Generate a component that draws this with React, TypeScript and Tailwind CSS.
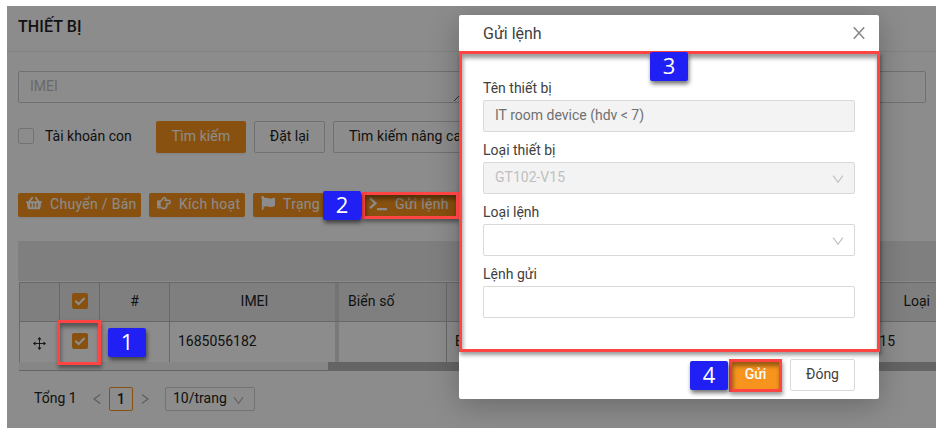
import React from "react";
import { FaShoppingBasket, FaRegHandPointRight, FaFlag } from "react-icons/fa";

function Chevron({ className = "" }: { className?: string }) {
  return (
    <svg width="12" height="12" viewBox="0 0 12 12" fill="none" stroke="currentColor" strokeWidth="1.1" className={className}>
      <path d="M1.2 2.6 6 9.2l4.8-6.6" />
    </svg>
  );
}

function PageArrow({ flip = false }: { flip?: boolean }) {
  return (
    <svg width="8" height="12" viewBox="0 0 8 12" fill="none" stroke="#aaa" strokeWidth="1.2" className={flip ? "-scale-x-100" : ""}>
      <path d="M7.2 1.6 1 6l6.2 4.6" />
    </svg>
  );
}

function Checked() {
  return (
    <span className="-mt-0.5 flex size-4 items-center justify-center rounded-[2px] bg-[#f7941d]">
      <svg width="12" height="12" viewBox="0 0 12 12" fill="none" stroke="#fff" strokeWidth="2">
        <path d="M1.3 5.8 4.6 9l6-6" />
      </svg>
    </span>
  );
}

function Prompt() {
  return (
    <svg width="18" height="14" viewBox="0 0 18 14" fill="none" stroke="currentColor" strokeWidth="2.3" className="-mt-0.5">
      <path d="M1 1.2 6.4 6.2 1 11.2M8 12.2H18" />
    </svg>
  );
}

function Move() {
  return (
    <svg width="13" height="13" viewBox="0 0 14 14" className="mt-0.5" fill="none" stroke="#222" strokeWidth="1">
      <path d="M7 1.5v11M1.5 7h11" />
      <path fill="#222" stroke="none" d="M7 0 9.2 2.6H4.8ZM7 14l2.2-2.6H4.8ZM0 7l2.6-2.2v4.4ZM14 7l-2.6-2.2v4.4Z" />
    </svg>
  );
}

function Badge({ n, className }: { n: number; className: string }) {
  return (
    <div className={"absolute flex h-[29px] w-[38px] items-center justify-center rounded-[2px] bg-[#2020f5] pb-[3px] font-['Open_Sans','Noto_Sans',sans-serif] text-[22px] leading-none text-white shadow-[1px_3px_4px_rgba(0,0,0,0.55)] " + className}>
      {n}
    </div>
  );
}

function Frame({ className }: { className: string }) {
  return (
    <div className={"absolute border-3 border-[#ff4444] shadow-[1px_3px_4px_rgba(0,0,0,0.4),inset_1px_4px_4px_rgba(0,0,0,0.4)] " + className} />
  );
}

function Tool({ icon, label, className }: { icon: React.ReactNode; label: string; className: string }) {
  return (
    <div className={"flex h-6 shrink-0 items-center gap-2 rounded-[2px] bg-[#f7941d] pl-2 tracking-[0.3px] whitespace-nowrap text-white shadow-[0_2px_0_rgba(0,0,0,0.045)] " + className}>
      {icon}
      <span className="-mt-0.5 leading-[22px]">{label}</span>
    </div>
  );
}

function Field({ label, value = "", valueClass = "", disabled = false, arrow = false }: { label: string; value?: string; valueClass?: string; disabled?: boolean; arrow?: boolean }) {
  return (
    <div className="flex h-[62px] flex-col">
      <div className="h-[24px] text-[#404040] leading-[24px]">{label}</div>
      <div className={"flex h-8 items-center justify-between rounded-[2px] border border-[#d9d9d9] pr-[10px] pl-[11px] " + (disabled ? "bg-[#f3f3f3]" : "bg-white")}>
        <span className={"-mt-0.5 " + valueClass}>{value}</span>
        {arrow && <Chevron className="mt-0.5 text-[#bfbfbf]" />}
      </div>
    </div>
  );
}

function Page() {
  return (
    <div className="flex h-full flex-col">
      <header className="flex h-[46px] shrink-0 items-center border-b border-[#ebebeb] pl-[11px]">
        <h1 className="-mt-1 text-[16px] font-medium tracking-[0.1px] text-[#222]">THIẾT BỊ</h1>
      </header>
      <div className="flex flex-col pl-[11px]">
        <div className="mt-[19px] mr-[10px] flex h-8 rounded-[2px] border border-[#ccc] pl-[11px]">
          <span className="w-[424px] leading-[29px] text-[#bfbfbf]">IMEI</span>
          <svg width="9" height="9" viewBox="0 0 9 9" className="mt-[21px]" stroke="#555" strokeWidth="1">
            <path d="M0 8 8 0M5 8l3-3" />
          </svg>
        </div>
        <div className="mt-[18px] flex h-8 items-center">
          <span className="-mt-0.5 size-4 rounded-[2px] border border-[#d1d1d1]" />
          <span className="-mt-0.5 ml-[11px] w-[111px]">Tài khoản con</span>
          <div className="flex h-8 w-[90px] items-center justify-center rounded-[2px] bg-[#f7941d] pb-0.5 tracking-[0.1px] text-white shadow-[0_2px_0_rgba(0,0,0,0.045)]">Tìm kiếm</div>
          <div className="ml-2 flex h-8 w-[71px] items-center justify-center rounded-[2px] border border-[#ccc] pb-0.5">Đặt lại</div>
          <div className="ml-2 flex h-8 w-[150px] items-center rounded-[2px] border border-[#ccc] pb-0.5 pl-[15px] tracking-[0.1px] whitespace-nowrap">Tìm kiếm nâng cao</div>
        </div>
        <div className="mt-10 flex h-6 gap-2">
          <Tool className="w-[123px]" icon={<FaShoppingBasket size={16} className="-mt-1" />} label="Chuyển / Bán" />
          <Tool className="w-[96px]" icon={<FaRegHandPointRight size={14} className="-mt-1" stroke="currentColor" strokeWidth={12} />} label="Kích hoạt" />
          <Tool className="w-[71px]" icon={<FaFlag size={14} className="-mt-1 shrink-0" />} label="Trạng" />
          <Tool className="ml-[29px] w-[97px]" icon={<Prompt />} label="Gửi lệnh" />
        </div>
        <div className="mt-6 h-10 bg-[#e8e8e8]" />
        <div className="ml-px flex flex-col border-b border-[#b8b8b8] pt-px">
          <div className="flex h-10 border-y border-l border-[#bdbdbd] bg-[#e8e8e8]">
            <div className="w-10 border-r border-[#bdbdbd]" />
            <div className="flex w-10 items-center justify-center border-r border-[#bdbdbd]"><Checked /></div>
            <div className="flex w-[70px] items-center justify-center border-r border-[#bdbdbd] pb-0.5">#</div>
            <div className="flex w-[169px] items-center justify-center border-r-4 border-[#d3d3d3] pb-0.5 pl-1">IMEI</div>
            <div className="flex w-[108px] items-center border-r border-[#bdbdbd] pb-0.5 pl-[9px] tracking-[0.1px]">Biển số</div>
            <div className="flex flex-1 items-center justify-end pr-[6px] pb-0.5">Loại</div>
          </div>
          <div className="flex h-10 border-l border-[#bdbdbd]">
            <div className="flex w-10 items-center justify-center border-r border-[#ddd]"><Move /></div>
            <div className="flex w-10 items-center justify-center border-r border-[#bdbdbd]"><Checked /></div>
            <div className="w-[70px] border-r border-[#bdbdbd]" />
            <div className="flex w-[169px] items-center border-r-4 border-[#ddd] pb-0.5 pl-2">1685056182</div>
            <div className="w-[108px] border-r border-[#bdbdbd]" />
            <div className="flex flex-1 items-center justify-between pr-[41px] pb-0.5 pl-2"><span>E</span><span>V15</span></div>
          </div>
          <div className="flex h-2 justify-end bg-[#f4f4f4]">
            <div className="w-[608px] bg-[#b7b7b7]" />
          </div>
        </div>
        <div className="mt-4 flex h-6 items-center pl-4">
          <span className="-mt-0.5 w-[59px]">Tổng 1</span>
          <PageArrow />
          <span className="ml-2 flex size-6 items-center justify-center rounded-[2px] border border-[#f7941d] font-medium">1</span>
          <span className="ml-2 flex w-6"><PageArrow flip /></span>
          <span className="flex h-6 w-[90px] items-center justify-between rounded-[2px] border border-[#d1d1d1] pr-[10px] pb-0.5 pl-[7px]">
            10/trang
            <Chevron className="mt-1 size-[11px] text-[#aaa]" />
          </span>
        </div>
      </div>
    </div>
  );
}

function Modal() {
  return (
    <div className="absolute top-[15px] left-[459px] flex h-[384px] w-[420px] flex-col rounded-[2px] bg-white shadow-[0_6px_30px_rgba(0,0,0,0.25)]">
      <div className="flex h-9 items-center justify-between pr-[14px] pl-6">
        <span className="mt-0.5 text-[16px] text-[#404040]">Gửi lệnh</span>
        <svg width="12" height="12" viewBox="0 0 12 12" stroke="#888" strokeWidth="1.6">
          <path d="m.8.3 10.4 11.4M11.2.3.8 11.7" />
        </svg>
      </div>
      <div className="flex h-[301px] flex-col px-6 pt-[25px]">
        <Field label="Tên thiết bị" value="IT room device (hdv < 7)" valueClass="text-[#707070]" disabled />
        <Field label="Loại thiết bị" value="GT102-V15" valueClass="text-[#bfbfbf]" disabled arrow />
        <Field label="Loại lệnh" arrow />
        <Field label="Lệnh gửi" />
      </div>
      <div className="flex justify-end gap-2 pt-[7px] pr-6">
        <div className="flex h-8 w-[53px] items-center justify-center bg-[#f7941d] pb-0.5 font-medium text-white">Gửi</div>
        <div className="flex h-8 w-[65px] items-center justify-center rounded-[2px] border border-[#d9d9d9] pb-0.5 text-[#404040]">Đóng</div>
      </div>
    </div>
  );
}

export default function App() {
  return (
    <div className="relative h-[435px] w-[944px] overflow-hidden bg-white pt-[6px] pl-[7px] font-[Roboto,'Liberation_Sans',sans-serif] text-[14px] leading-[22px] text-[#222]">
      <div className="relative h-[422px] w-[929px] overflow-hidden">
        <Page />
        <div className="absolute inset-0 bg-black/45" />
      </div>
      <div className="absolute top-[6px] left-[7px] h-[422px] w-[929px] overflow-hidden">
        <div className="absolute -top-[6px] -left-[7px] h-[435px] w-[944px]">
          <Modal />
          <Frame className="top-[320px] left-[57px] h-[45px] w-[44px]" />
          <Frame className="top-[192px] left-[362px] h-[27px] w-[97px]" />
          <Frame className="top-[51px] left-[459px] h-[301px] w-[421px]" />
          <Frame className="top-[359px] left-[729px] h-[33px] w-[53px]" />
          <Badge n={1} className="top-[328px] left-[108px]" />
          <Badge n={2} className="top-[191px] left-[323px]" />
          <Badge n={3} className="top-[52px] left-[650px]" />
          <Badge n={4} className="top-[361px] left-[690px]" />
        </div>
      </div>
    </div>
  );
}
